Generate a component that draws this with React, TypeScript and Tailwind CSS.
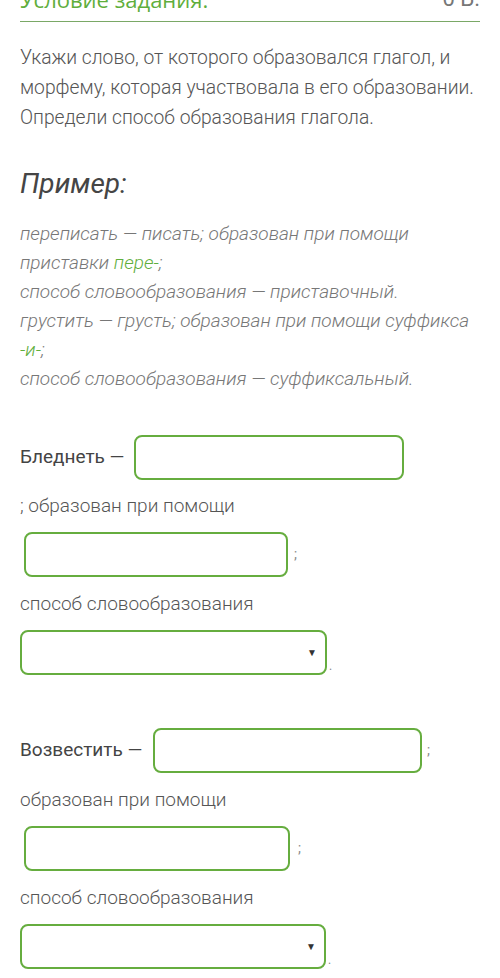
const FONT = "font-['Roboto','Liberation_Sans',sans-serif]"

// ── Small pieces ──────────────────────────────────────────────────────────────

function Field({ width, className = "" }: { width: string; className?: string }) {
  return (
    <div
      className={`h-[45px] ${width} shrink-0 rounded-[8px] border-2 border-[#66ad3f] bg-white ${className}`}
    />
  )
}

function Select({ width }: { width: string }) {
  return (
    <div
      className={`flex h-[45px] ${width} shrink-0 items-center justify-end rounded-[8px] border-2 border-[#66ad3f] bg-white pr-[8px]`}
    >
      <span className="text-[10px] leading-none text-[#333]">▼</span>
    </div>
  )
}

function Line({ children, className = "" }: { children: React.ReactNode; className?: string }) {
  return (
    <p className={`text-[19px] font-light leading-[29px] text-[#555] ${className}`}>{children}</p>
  )
}

// ── Page ──────────────────────────────────────────────────────────────────────

export default function App() {
  return (
    <div className={`min-h-[978px] w-[500px] overflow-hidden bg-white px-5 ${FONT}`}>
      {/* Header */}
      <div className="-mt-[12px] flex items-end justify-between border-b border-[#7aa866] pb-[11px]">
        <span className="font-['Open_Sans',sans-serif] text-[22px] leading-[22px] text-[#5fae3c]">
          Условие задания:
        </span>
        <span className="text-[22px] leading-[22px] text-[#777]">0 Б.</span>
      </div>

      {/* Task */}
      <p className="mt-[21px] text-[19.3px] font-light leading-[30px] text-[#555]">
        Укажи слово, от которого образовался глагол, и морфему, которая участвовала в его
        образовании. Определи способ образования глагола.
      </p>

      {/* Example */}
      <h2 className="mt-[33px] text-[28px] italic leading-[36px] text-[#454545]">Пример:</h2>
      <div className="mt-[17px] text-[19px] font-light italic leading-[29px] text-[#777]">
        <p>
          переписать — писать; образован при помощи приставки{" "}
          <span className="text-[#5fae3c]">пере-</span>;
        </p>
        <p>способ словообразования — приставочный.</p>
        <p>
          грустить — грусть; образован при помощи суффикса{" "}
          <span className="text-[#5fae3c]">-и-</span>;
        </p>
        <p>способ словообразования — суффиксальный.</p>
      </div>

      {/* Task 1 */}
      <div className="mt-[42px] flex items-center">
        <span className="w-[114px] text-[19px] font-normal text-[#444]">Бледнеть —</span>
        <Field width="w-[270px]" />
      </div>
      <Line className="mt-[11px]">; образован при помощи</Line>
      <div className="mt-[12px] flex items-center">
        <Field width="w-[264px]" className="ml-[4px]" />
        <span className="ml-[6px] text-[14px] text-[#888]">;</span>
      </div>
      <Line className="mt-[12px]">способ словообразования</Line>
      <div className="mt-[12px] flex items-end">
        <Select width="w-[307px]" />
        <span className="ml-[2px] text-[12px] text-[#888]">.</span>
      </div>

      {/* Task 2 */}
      <div className="mt-[53px] flex items-center">
        <span className="w-[133px] text-[19px] font-normal text-[#444]">Возвестить —</span>
        <Field width="w-[269px]" />
        <span className="ml-[5px] text-[14px] text-[#888]">;</span>
      </div>
      <Line className="mt-[12px]">образован при помощи</Line>
      <div className="mt-[12px] flex items-center">
        <Field width="w-[266px]" className="ml-[4px]" />
        <span className="ml-[8px] text-[14px] text-[#888]">;</span>
      </div>
      <Line className="mt-[12px]">способ словообразования</Line>
      <div className="mt-[12px] flex items-end">
        <Select width="w-[306px]" />
        <span className="ml-[2px] text-[12px] text-[#888]">.</span>
      </div>
    </div>
  )
}
